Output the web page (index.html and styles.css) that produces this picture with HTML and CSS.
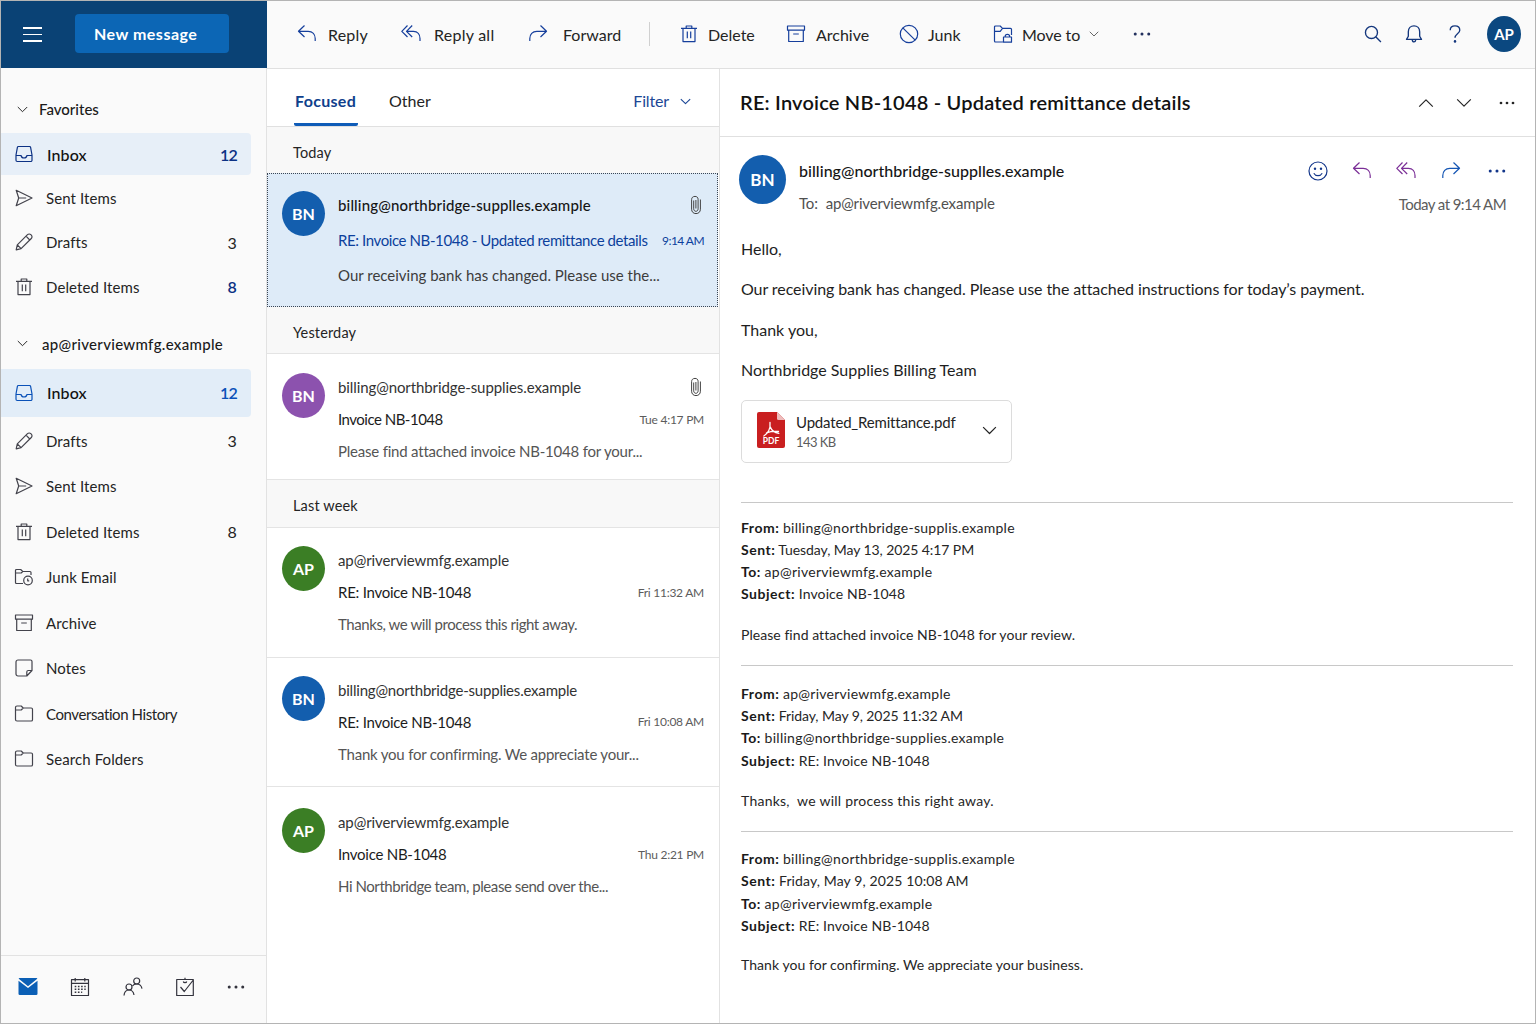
FILE: index.html
```
<!DOCTYPE html>
<html lang="en">
<head>
    <meta charset="UTF-8">
    <meta name="viewport" content="width=device-width, initial-scale=1.0">
    <title>Mail</title>
    <link rel="stylesheet" href="styles.css">
</head>
<body>

    <!-- icons -->
    <svg class="sprite" width="0" height="0">
        <symbol id="i-inbox" viewBox="0 0 20 20"><path d="M4.4 2.5h11.2a1 1 0 0 1 1 .8L18 11v5.3a1.2 1.2 0 0 1-1.2 1.2H3.2A1.2 1.2 0 0 1 2 16.300V11l1.400-7.700a1 1 0 0 1 1-.8zM2 11.500h5c.4 1.700 1.400 2.500 3 2.500s2.600-.8 3-2.500h5"/></symbol>
        <symbol id="i-send" viewBox="0 0 20 20"><path d="M2.200 2.300 18 10 2.200 17.700 4.700 10zM4.700 10h7.500"/></symbol>
        <symbol id="i-pencil" viewBox="0 0 20 20"><path d="M2.200 17.800l1.100-4.900L13.500 2.700a2.300 2.300 0 0 1 3.300 0l.5.5a2.300 2.300 0 0 1 0 3.300L7.100 16.700zM12 4.200l3.800 3.800M3.300 12.900l3.800 3.800"/></symbol>
        <symbol id="i-trash" viewBox="0 0 20 20"><path d="M2 4.300h16M4 4.300v13.300h12V4.300M7.200 4.300V2h5.600v2.300M8.300 7.500v6.700M11.700 7.500v6.700"/></symbol>
        <symbol id="i-junkfolder" viewBox="0 0 20 20"><path d="M9 16.500H2.500a1 1 0 0 1-1-1V3.500a1 1 0 0 1 1-1h4.200l2 2H16a1 1 0 0 1 1 1V8M1.500 6h5.700l1.500-1.500"/><circle cx="14" cy="13.500" r="4.300"/><path d="M13.700 11.500v2.300h1.500"/></symbol>
        <symbol id="i-archive" viewBox="0 0 20 20"><path d="M1.500 2h17v4.200h-17zM2.700 6.200v11.300h14.600V6.200M7.200 10h5.600"/></symbol>
        <symbol id="i-note" viewBox="0 0 20 20"><path d="M4 2h12.500a1.500 1.500 0 0 1 1.500 1.500v9L12.800 18H4a2 2 0 0 1-2-2V4a2 2 0 0 1 2-2zM18 12.500h-3.700a1.500 1.500 0 0 0-1.500 1.500v4"/></symbol>
        <symbol id="i-folder" viewBox="0 0 20 20"><path d="M1.500 15.500v-12a1.500 1.500 0 0 1 1.500-1.500h4.200l2 2h8A1.300 1.300 0 0 1 18.500 5.300v10.400a1.300 1.300 0 0 1-1.300 1.300H3a1.500 1.500 0 0 1-1.500-1.500zM1.500 6h5.700l2-2"/></symbol>
        <symbol id="i-down" viewBox="0 0 20 20"><path d="M1.500 5.500l8.500 8.500 8.500-8.500"/></symbol>
        <symbol id="i-reply" viewBox="0 0 20 20"><path d="M7.500 1.500 1.500 7.300l6 5.700M1.500 7.300h9.700c4.300 0 7 3 7 7.200V17"/></symbol>
        <symbol id="i-replyall" viewBox="0 0 20 20"><path d="M6.500 1.500.8 7.300l5.700 5.700M11.200 1.500 5.500 7.300l5.700 5.700M5.500 7.300h7c4 0 6.500 3 6.500 7.200V17"/></symbol>
        <symbol id="i-forward" viewBox="0 0 20 20"><path d="M12.500 1.500l6 5.800-6 5.700M18.500 7.300H8.800c-4.300 0-7 3-7 7.200V17"/></symbol>
        <symbol id="i-block" viewBox="0 0 20 20"><circle cx="10" cy="10" r="8.700"/><path d="M3.800 3.800l12.400 12.400"/></symbol>
        <symbol id="i-move" viewBox="0 0 20 20"><path d="M10 18H2.500a1 1 0 0 1-1-1V3a1 1 0 0 1 1-1h4.700l2.300 2.300h8a1 1 0 0 1 1 1V11M1.500 7.300h5.700l2.300-3M10.500 13h8v5.200h-8zM12.200 13v-.7c0-1.200.9-2 2.200-2s2.200.8 2.200 2v.7"/></symbol>
        <symbol id="i-dots" viewBox="0 0 20 20"><g class="solid"><circle cx="2.500" cy="10" r="1.700"/><circle cx="10" cy="10" r="1.700"/><circle cx="17.500" cy="10" r="1.700"/></g></symbol>
        <symbol id="i-search" viewBox="0 0 20 20"><circle cx="8.300" cy="8.300" r="6.700"/><path d="M13 13l5.800 5.800"/></symbol>
        <symbol id="i-bell" viewBox="0 0 20 20"><path d="M1.700 16h16.600l-2-3.500V7.500c0-3.700-2.600-6.500-6.300-6.500S3.700 3.800 3.700 7.500v5zM8 16.200c.2 1.700.9 2.500 2 2.500s1.800-.8 2-2.500"/></symbol>
        <symbol id="i-help" viewBox="0 0 20 20"><path d="M4.700 5.700C4.700 3 6.800 1 10 1s5.300 2 5.300 4.700c0 3.800-5.300 4.300-5.300 8.600"/><circle class="solid" cx="10" cy="18.200" r="1.400"/></symbol>
        <symbol id="i-clip" viewBox="0 0 12 20"><path d="M3.700 5.500v8.300c0 1.600 1 2.500 2.200 2.500s2.200-.9 2.200-2.500V4.300c0-1.800-1.200-2.900-3.100-2.900-2.100 0-3.400 1.200-3.400 3.200v9.600c0 2.600 1.700 4.400 4.400 4.400s4.400-1.800 4.400-4.400V4.500M5.900 5v8.500"/></symbol>
        <symbol id="i-smile" viewBox="0 0 20 20"><circle cx="10" cy="10" r="9"/><path d="M5.800 12.200c1 1.700 2.400 2.500 4.200 2.500s3.200-.8 4.200-2.500"/><circle class="solid" cx="7" cy="7.800" r="1.200"/><circle class="solid" cx="13" cy="7.800" r="1.200"/></symbol>
        <symbol id="i-calendar" viewBox="0 0 20 20"><path d="M1.500 2.700h17v15.800h-17zM1.500 6.300h17M5.200 1v3.500M14.800 1v3.500"/><path class="dotted" d="M4.700 9.500h11M4.700 12.300h11M4.700 15.200h7.500"/></symbol>
        <symbol id="i-people" viewBox="0 0 20 20"><circle cx="6" cy="10" r="3"/><path d="M1 18.500c.3-3.400 2-5.500 5-5.500s4.500 1.800 5 5"/><circle cx="13.700" cy="4" r="3"/><path d="M9.500 9c.8-1.300 2.200-2 4-2 3.200 0 5 2 5.500 4.700"/></symbol>
        <symbol id="i-task" viewBox="0 0 20 20"><path d="M1.700 2.500h16.600v16H1.700zM10 .8v1.700M8.300 4.500c.3 1.400 3.100 1.400 3.400 0M5.500 10l3.800 4.500L18.300 3"/></symbol>
    </svg>

    <div class="app">
        <aside class="sidebar">
            <div class="brand-bar">
                <div class="burger"><span></span><span></span><span></span></div>
                <button class="new-message">New message</button>
            </div>

            <nav class="folders">
                <div class="section"><svg class="chev"><use href="#i-down"/></svg>Favorites</div>
                <ul class="favorites">
                    <li class="active"><svg><use href="#i-inbox"/></svg>Inbox<b>12</b></li>
                    <li><svg><use href="#i-send"/></svg>Sent Items</li>
                    <li><svg><use href="#i-pencil"/></svg>Drafts<b>3</b></li>
                    <li class="unread"><svg><use href="#i-trash"/></svg>Deleted Items<b>8</b></li>
                </ul>
                <div class="section account"><svg class="chev"><use href="#i-down"/></svg>ap@riverviewmfg.example</div>
                <ul class="all">
                    <li class="active bright"><svg><use href="#i-inbox"/></svg>Inbox<b>12</b></li>
                    <li><svg><use href="#i-pencil"/></svg>Drafts<b>3</b></li>
                    <li><svg><use href="#i-send"/></svg>Sent Items</li>
                    <li><svg><use href="#i-trash"/></svg>Deleted Items<b>8</b></li>
                    <li><svg><use href="#i-junkfolder"/></svg>Junk Email</li>
                    <li><svg><use href="#i-archive"/></svg>Archive</li>
                    <li><svg><use href="#i-note"/></svg>Notes</li>
                    <li class="long"><svg><use href="#i-folder"/></svg>Conversation History</li>
                    <li><svg><use href="#i-folder"/></svg>Search Folders</li>
                </ul>
            </nav>

            <div class="switcher">
                <svg class="mail" viewBox="0 0 20 20"><path d="M1.500 1h17a.8.8 0 0 1 .8.800L10 9.200.7 1.800a.8.8 0 0 1 .8-.8zM.5 3.700l9.500 7.400 9.500-7.400v13a1.300 1.300 0 0 1-1.300 1.300H1.800a1.300 1.300 0 0 1-1.300-1.300z"/></svg>
                <svg><use href="#i-calendar"/></svg>
                <svg><use href="#i-people"/></svg>
                <svg><use href="#i-task"/></svg>
                <svg class="dots"><use href="#i-dots"/></svg>
            </div>
        </aside>

        <div class="main">
            <header class="toolbar">
                <div class="tool reply"><svg><use href="#i-reply"/></svg>Reply</div>
                <div class="tool reply-all"><svg><use href="#i-replyall"/></svg>Reply all</div>
                <div class="tool forward"><svg><use href="#i-forward"/></svg>Forward</div>
                <div class="divider"></div>
                <div class="tool delete"><svg><use href="#i-trash"/></svg>Delete</div>
                <div class="tool archive"><svg><use href="#i-archive"/></svg>Archive</div>
                <div class="tool junk"><svg><use href="#i-block"/></svg>Junk</div>
                <div class="tool move"><svg><use href="#i-move"/></svg>Move to<svg class="chev"><use href="#i-down"/></svg></div>
                <svg class="dots"><use href="#i-dots"/></svg>
                <div class="tools-right">
                    <svg><use href="#i-search"/></svg>
                    <svg><use href="#i-bell"/></svg>
                    <svg><use href="#i-help"/></svg>
                    <div class="avatar me">AP</div>
                </div>
            </header>

            <div class="panes">
                <section class="list">
                    <div class="tabs">
                        <div class="tab selected">Focused</div>
                        <div class="tab">Other</div>
                        <div class="filter">Filter<svg class="chev"><use href="#i-down"/></svg></div>
                    </div>

                    <div class="group today">Today</div>
                    <article class="mail-item open">
                        <div class="avatar blue">BN</div>
                        <div class="mail-text">
                            <div class="row from">billing@northbridge-supplles.example<svg class="clip"><use href="#i-clip"/></svg></div>
                            <div class="row subject">RE: Invoice NB-1048 - Updated remittance details<time>9:14 AM</time></div>
                            <div class="row preview">Our receiving bank has changed. Please use the...</div>
                        </div>
                    </article>

                    <div class="group yesterday">Yesterday</div>
                    <article class="mail-item first">
                        <div class="avatar purple">BN</div>
                        <div class="mail-text">
                            <div class="row from">billing@northbridge-supplies.example<svg class="clip"><use href="#i-clip"/></svg></div>
                            <div class="row subject">Invoice NB-1048<time>Tue 4:17 PM</time></div>
                            <div class="row preview">Please find attached invoice NB-1048 for your...</div>
                        </div>
                    </article>

                    <div class="group last-week">Last week</div>
                    <article class="mail-item older">
                        <div class="avatar green">AP</div>
                        <div class="mail-text">
                            <div class="row from">ap@riverviewmfg.example</div>
                            <div class="row subject">RE: Invoice NB-1048<time>Fri 11:32 AM</time></div>
                            <div class="row preview narrow">Thanks, we will process this right away.</div>
                        </div>
                    </article>
                    <article class="mail-item older">
                        <div class="avatar blue">BN</div>
                        <div class="mail-text">
                            <div class="row from narrow">billing@northbridge-supplies.example</div>
                            <div class="row subject">RE: Invoice NB-1048<time>Fri 10:08 AM</time></div>
                            <div class="row preview">Thank you for confirming. We appreciate your...</div>
                        </div>
                    </article>
                    <article class="mail-item older last">
                        <div class="avatar green">AP</div>
                        <div class="mail-text">
                            <div class="row from">ap@riverviewmfg.example</div>
                            <div class="row subject">Invoice NB-1048<time>Thu 2:21 PM</time></div>
                            <div class="row preview narrow">Hi Northbridge team, please send over the...</div>
                        </div>
                    </article>
                </section>

                <section class="reader">
                    <div class="reader-title">
                        <h1>RE: Invoice NB-1048 - Updated remittance details</h1>
                        <svg class="up"><use href="#i-down"/></svg>
                        <svg><use href="#i-down"/></svg>
                        <svg class="dots"><use href="#i-dots"/></svg>
                    </div>

                    <div class="reader-head">
                        <div class="avatar blue big">BN</div>
                        <div class="sender">
                            <div class="name">billing@northbridge-supplles.example</div>
                            <div class="to"><span>To:</span>ap@riverviewmfg.example</div>
                        </div>
                        <div class="head-right">
                            <div class="actions">
                                <svg><use href="#i-smile"/></svg>
                                <svg class="violet"><use href="#i-reply"/></svg>
                                <svg class="violet"><use href="#i-replyall"/></svg>
                                <svg class="blue-icon"><use href="#i-forward"/></svg>
                                <svg class="dots"><use href="#i-dots"/></svg>
                            </div>
                            <div class="date">Today at 9:14 AM</div>
                        </div>
                    </div>

                    <div class="letter">
                        <p>Hello,</p>
                        <p class="long">Our receiving bank has changed. Please use the attached instructions for today’s payment.</p>
                        <p>Thank you,</p>
                        <p>Northbridge Supplies Billing Team</p>
                    </div>

                    <div class="attachment">
                        <svg class="pdf" viewBox="0 0 28 36">
                            <path fill="#c91f20" d="M2 0h18l8 8v26a2 2 0 0 1-2 2H2a2 2 0 0 1-2-2V2a2 2 0 0 1 2-2z"/>
                            <path fill="#eebcbc" d="M20 0l8 8h-6.500A1.500 1.500 0 0 1 20 6.500z"/>
                            <path fill="none" stroke="#fff" stroke-width="1.300" stroke-linecap="round" d="M13 10.500c.4 3.500.2 5.500-1.200 8-1.200 2.300-2.700 4.200-5 5.500M13.300 15c1.200 3.200 4 5.600 8.500 6.300M9.500 20.800c3.500-1.200 7.500-1.700 12-1.300"/>
                            <text x="14" y="31.800" text-anchor="middle">PDF</text>
                        </svg>
                        <div class="file">
                            <div class="file-name">Updated_Remittance.pdf</div>
                            <div class="file-size">143 KB</div>
                        </div>
                        <svg class="chev"><use href="#i-down"/></svg>
                    </div>

                    <div class="quote">
                        <div class="q-line"><b>From:</b> <span class="addr">billing@northbridge-supplis.example</span></div>
                        <div class="q-line sent"><b>Sent:</b> Tuesday, May 13, 2025 4:17 PM</div>
                        <div class="q-line"><b>To:</b> <span class="addr">ap@riverviewmfg.example</span></div>
                        <div class="q-line"><b>Subject:</b> Invoice NB-1048</div>
                        <p>Please find attached invoice NB-1048 for your review.</p>
                    </div>
                    <div class="quote second">
                        <div class="q-line"><b>From:</b> <span class="addr">ap@riverviewmfg.example</span></div>
                        <div class="q-line sent"><b>Sent:</b> Friday, May 9, 2025 11:32 AM</div>
                        <div class="q-line"><b>To:</b> <span class="addr">billing@northbridge-supplies.example</span></div>
                        <div class="q-line"><b>Subject:</b> RE: Invoice NB-1048</div>
                        <p>Thanks,&nbsp; we will process this right away.</p>
                    </div>
                    <div class="quote third">
                        <div class="q-line"><b>From:</b> <span class="addr">billing@northbridge-supplis.example</span></div>
                        <div class="q-line"><b>Sent:</b> Friday, May 9, 2025 10:08 AM</div>
                        <div class="q-line"><b>To:</b> <span class="addr">ap@riverviewmfg.example</span></div>
                        <div class="q-line"><b>Subject:</b> RE: Invoice NB-1048</div>
                        <p>Thank you for confirming. We appreciate your business.</p>
                    </div>
                </section>
            </div>
        </div>
    </div>

</body>
</html>
```
FILE: styles.css
```
* {
    box-sizing: border-box;
}

body {
    margin: 0;
    font-family: Lato, "Open Sans", sans-serif;
    font-size: 15px;
    color: #242424;
    background-color: #fff;
}

svg {
    width: 20px;
    height: 20px;
    flex: none;
    fill: none;
    stroke: currentColor;
    stroke-width: 1.2;
    stroke-linejoin: round;
}

.sprite {
    position: absolute;
    width: 0;
    height: 0;
}

.solid {
    fill: currentColor;
    stroke: none;
}

.dotted {
    stroke-dasharray: 1.6 1.6;
    stroke-width: 1.5;
}

.app {
    display: flex;
    width: 1536px;
    height: 1024px;
    border: 1px solid #b4b4b4;
    overflow: hidden;
}

.avatar {
    display: flex;
    align-items: center;
    justify-content: center;
    flex: none;
    width: 43px;
    height: 45px;
    border-radius: 50%;
    color: #fff;
    font-size: 16px;
    font-weight: 700;
}

.blue { background-color: #135eae; }
.purple { background-color: #8c52ae; }
.green { background-color: #3b7e25; }

/* ---------- sidebar ---------- */
.sidebar {
    display: flex;
    flex-direction: column;
    width: 266px;
    background-color: #fafafa;
    border-right: 1px solid #e2e2e2;
}

.brand-bar {
    display: flex;
    align-items: center;
    height: 67px;
    margin-right: -1px;
    padding-left: 22px;
    background-color: #0a4275;
}

.burger {
    display: flex;
    flex-direction: column;
    gap: 5px;
    width: 19px;
}

.burger span {
    height: 1.5px;
    background-color: #fff;
}

.new-message {
    width: 154px;
    height: 39px;
    margin: 0 0 2px 33px;
    padding: 0 0 0 19px;
    border: none;
    border-radius: 4px;
    background-color: #0c66b5;
    color: #fff;
    font: 700 16px Lato, sans-serif;
    letter-spacing: 0.5px;
    text-align: left;
}

.folders {
    flex: 1;
    padding-top: 22px;
}

.section {
    display: flex;
    align-items: center;
    height: 38px;
    padding-left: 16px;
    font-weight: 500;
    color: #1b1b1b;
}

.section .chev {
    width: 11px;
    height: 11px;
    margin-right: 11px;
    stroke-width: 1.7;
}

.account {
    height: 46px;
    margin-top: 12px;
    letter-spacing: 0.31px;
}

.account .chev {
    margin-right: 14px;
}

.folders ul {
    list-style: none;
    margin: 0;
    padding: 0;
}

.folders .favorites {
    margin-top: 5px;
}

.folders .all {
    margin-top: 2px;
}

.folders li {
    display: flex;
    align-items: center;
    height: 44.3px;
    width: 250px;
    padding: 0 14px 0 13px;
    letter-spacing: 0.1px;
}

.folders li svg {
    margin-right: 12px;
    color: #43434c;
}

.folders .all li {
    height: 45.5px;
}

.folders li b {
    margin-left: auto;
    font-weight: 400;
    font-size: 16px;
}

.folders .active {
    height: 42px;
    margin-bottom: 1px;
    border-radius: 0 4px 4px 0;
    background-color: #e7eff8;
    font-size: 16px;
    font-weight: 500;
    color: #111;
}

.folders .active svg {
    margin-right: 13px;
}

.folders .all .bright {
    height: 48px;
    margin-bottom: 1px;
    background-color: #e2edf8;
}

.folders .active svg,
.folders .active b,
.folders .unread b {
    color: #0c3184;
    font-weight: 600;
}

.folders .active b {
    letter-spacing: -0.8px;
}

.folders .bright svg,
.folders .bright b {
    color: #0a51b8;
}

.folders .long {
    letter-spacing: -0.42px;
}

.switcher {
    display: flex;
    align-items: center;
    gap: 32.3px;
    height: 68px;
    padding: 0 0 5px 17px;
    border-top: 1px solid #e2e2e2;
    color: #33333d;
}

.switcher .mail {
    fill: #0b5fb5;
    stroke: none;
}

.dots {
    width: 18px;
    height: 18px;
}

/* ---------- toolbar ---------- */
.main {
    display: flex;
    flex-direction: column;
    flex: 1;
}

.toolbar {
    display: flex;
    align-items: center;
    height: 68px;
    padding: 0 14px 1px 30px;
    background-color: #fafafa;
    border-bottom: 1px solid #e0e0e0;
    font-size: 16px;
}

.tool {
    display: flex;
    align-items: center;
}

.tool svg {
    color: #163f9c;
}

.reply { width: 104px; gap: 11px; letter-spacing: 0.2px; }
.reply-all { width: 127px; gap: 13px; letter-spacing: 0.25px; }
.forward { width: 121px; gap: 15px; }
.delete { width: 107px; gap: 9px; }
.archive { width: 113px; gap: 10px; }
.junk { width: 94px; gap: 9px; }
.move { width: 140px; gap: 9px; letter-spacing: -0.1px; }

.tool .chev {
    width: 10px;
    height: 10px;
    color: #555;
    stroke-width: 1.8;
}

.divider {
    width: 1px;
    height: 24px;
    margin-right: 29px;
    background-color: #d0d0d0;
}

.toolbar > .dots {
    color: #23315e;
}

.tools-right {
    display: flex;
    align-items: center;
    gap: 23px;
    margin-left: auto;
    color: #14377d;
}

.tools-right svg {
    width: 18px;
    height: 18px;
    stroke-width: 1.5;
}

.me {
    width: 34px;
    height: 36px;
    background-color: #0b4880;
    font-size: 15px;
}

/* ---------- message list ---------- */
.panes {
    display: flex;
    flex: 1;
}

.list {
    width: 453px;
    border-right: 1px solid #e2e2e2;
}

.tabs {
    display: flex;
    height: 58px;
    padding: 0 28px 0 27px;
    border-bottom: 1px solid #e0e0e0;
    font-size: 16px;
    line-height: 64px;
}

.tab {
    margin-right: 31px;
}

.selected {
    width: 64px;
    border-bottom: 3px solid #0f5cb8;
    border-radius: 2px;
    color: #0f3f8c;
    font-weight: 700;
    letter-spacing: 0.3px;
    text-indent: 1px;
}

.filter {
    display: flex;
    align-items: center;
    height: 64px;
    margin-left: auto;
    color: #1c4796;
    letter-spacing: -0.15px;
}

.filter .chev {
    width: 11px;
    height: 11px;
    margin-left: 11px;
    stroke-width: 2;
}

.group {
    display: flex;
    align-items: center;
    padding-left: 26px;
    background-color: #f8f8f8;
    font-size: 14.5px;
    letter-spacing: 0.15px;
}

.today { height: 46px; padding-top: 5px; }
.yesterday { height: 47px; padding-top: 4px; border-bottom: 1px solid #e4e4e4; }
.last-week { height: 48px; padding-top: 4px; border-bottom: 1px solid #e4e4e4; }

.mail-item {
    display: flex;
    gap: 13px;
    height: 129.5px;
    padding: 18px 15px 0 15px;
    border-bottom: 1px solid #e4e4e4;
}

.mail-item.open {
    height: 134px;
    margin-right: 1px;
    padding: 17px 13px 0 14px;
    border: 1px dotted #3c4654;
    background-color: #deebf8;
}

.mail-item.first { height: 126px; padding-top: 19px; }
.mail-item.last { padding-top: 21px; border-bottom: none; }

.mail-text {
    flex: 1;
    margin-top: -2px;
}

.row {
    display: flex;
    align-items: center;
    justify-content: space-between;
    height: 32.2px;
    white-space: nowrap;
}

.open .mail-text { margin-top: -4px; }
.open .row { height: 35px; }

.from {
    letter-spacing: -0.09px;
    color: #333;
}

.subject {
    letter-spacing: -0.5px;
    color: #1c1c1c;
}

.older .subject {
    letter-spacing: -0.25px;
}

.preview {
    letter-spacing: -0.21px;
    color: #555;
}

.from.narrow { letter-spacing: -0.2px; }
.preview.narrow { letter-spacing: -0.43px; }

.open .from {
    font-weight: 500;
    letter-spacing: 0.15px;
    color: #161616;
}

.open .subject {
    letter-spacing: -0.4px;
    color: #0c3f9c;
}

.open .preview {
    letter-spacing: 0;
    color: #3c3c3c;
}

.subject time {
    font-size: 12px;
    letter-spacing: -0.25px;
    color: #5c5c5c;
}

.open time {
    padding-top: 2px;
    letter-spacing: -0.55px;
    color: #0c3f9c;
}

.clip {
    width: 12px;
    height: 20px;
    margin-right: 2px;
    color: #444;
    stroke-width: 1;
}

/* ---------- reading pane ---------- */
.reader {
    flex: 1;
    padding-left: 20px;
}

.reader-title {
    display: flex;
    align-items: center;
    height: 68px;
    margin-left: -20px;
    padding: 0 19px 0 20px;
    border-bottom: 1px solid #e0e0e0;
}

.reader-title h1 {
    flex: 1;
    margin: 0;
    padding-bottom: 2px;
    font-size: 20px;
    font-weight: 600;
    letter-spacing: 0.2px;
    color: #111;
}

.reader-title svg {
    width: 16px;
    height: 16px;
    margin-right: 22px;
    stroke-width: 1.5;
}

.reader-title .up {
    transform: rotate(180deg);
}

.reader-title .dots {
    width: 18px;
    margin: 0 0 0 4px;
}

.reader-head {
    display: flex;
    height: 92px;
    padding: 18px 29px 0 0;
}

.big {
    width: 47px;
    height: 49px;
    margin-left: -1px;
    font-size: 17px;
}

.sender {
    flex: 1;
    margin-left: 13px;
}

.name {
    height: 32px;
    line-height: 32px;
    font-size: 16px;
    font-weight: 500;
    letter-spacing: 0.04px;
    color: #161616;
}

.to {
    height: 32px;
    line-height: 32px;
    letter-spacing: -0.18px;
    color: #505050;
}

.to span {
    margin-right: 8px;
}

.head-right {
    display: flex;
    flex-direction: column;
    align-items: flex-end;
}

.actions {
    display: flex;
    align-items: center;
    gap: 24px;
    height: 32px;
    color: #13368a;
}

.actions .violet { color: #7b2f97; }
.actions .blue-icon { color: #1556b4; margin-left: 1px; }
.actions .dots { margin-left: 3px; }

.date {
    height: 34px;
    line-height: 34px;
    letter-spacing: -0.57px;
    color: #5c5c5c;
}

.letter {
    padding-left: 1px;
    font-size: 16px;
    color: #1e1e1e;
}

.letter p {
    height: 40.4px;
    line-height: 40.4px;
    margin: 0;
}

.letter .long {
    letter-spacing: -0.08px;
}

.attachment {
    display: flex;
    align-items: center;
    width: 271px;
    height: 63px;
    margin: 9px 0 39px 1px;
    padding: 0 14px 2px 15px;
    border: 1px solid #dcdcdc;
    border-radius: 5px;
}

.pdf {
    width: 28px;
    height: 36px;
    stroke: none;
}

.pdf text {
    fill: #fff;
    font-size: 8.5px;
    font-weight: 700;
}

.file {
    flex: 1;
    margin-left: 11px;
    padding-top: 4px;
}

.file-name {
    line-height: 21px;
    letter-spacing: -0.18px;
}

.file-size {
    line-height: 19px;
    font-size: 13px;
    letter-spacing: -0.55px;
    color: #5c5c5c;
}

.attachment .chev {
    width: 15px;
    height: 15px;
    stroke-width: 1.6;
}

.quote {
    margin: 0 22px 0 1px;
    padding-top: 14px;
    border-top: 1px solid #c8c8c8;
    font-size: 14px;
    color: #262626;
}

.q-line {
    height: 22.3px;
    line-height: 22.3px;
    letter-spacing: 0.12px;
}

.q-line b {
    letter-spacing: 0.5px;
    color: #1a1a1a;
}

.sent { letter-spacing: -0.08px; }
.addr { letter-spacing: 0.27px; }

.quote p {
    height: 20px;
    line-height: 20px;
    margin: 19px 0 20px;
    letter-spacing: 0.05px;
}

.second { padding-top: 17px; }
.second p { letter-spacing: 0.24px; }
.third { padding-top: 16px; }
.third p { margin-top: 18px; }
```
